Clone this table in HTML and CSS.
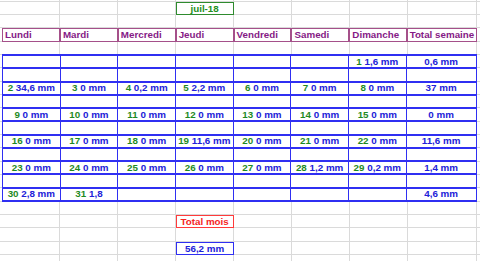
FILE: index.html
```html
<!DOCTYPE html>
<html lang="fr">
<head>
<meta charset="utf-8">
<title>Pluviométrie juil-18</title>
<link rel="stylesheet" href="styles.css">
</head>
<body>
<div class="sheet">
  <div class="month-box">juil-18</div>

  <div class="header-row">
    <div class="hcell">Lundi</div>
    <div class="hcell">Mardi</div>
    <div class="hcell">Mercredi</div>
    <div class="hcell">Jeudi</div>
    <div class="hcell">Vendredi</div>
    <div class="hcell">Samedi</div>
    <div class="hcell">Dimanche</div>
    <div class="hcell hcell-total">Total semaine</div>
  </div>

  <div class="weeks">
    <div class="c"></div><div class="c"></div><div class="c"></div><div class="c"></div><div class="c"></div><div class="c"></div>
    <div class="c"><span class="d">1</span> 1,6 mm</div><div class="c">0,6 mm</div>
    <div class="c"></div><div class="c"></div><div class="c"></div><div class="c"></div><div class="c"></div><div class="c"></div><div class="c"></div><div class="c"></div>

    <div class="c"><span class="d">2</span> 34,6 mm</div><div class="c"><span class="d">3</span> 0 mm</div><div class="c"><span class="d">4</span> 0,2 mm</div><div class="c"><span class="d">5</span> 2,2 mm</div><div class="c"><span class="d">6</span> 0 mm</div><div class="c"><span class="d">7</span> 0 mm</div><div class="c"><span class="d">8</span> 0 mm</div><div class="c">37 mm</div>
    <div class="c"></div><div class="c"></div><div class="c"></div><div class="c"></div><div class="c"></div><div class="c"></div><div class="c"></div><div class="c"></div>

    <div class="c"><span class="d">9</span> 0 mm</div><div class="c"><span class="d">10</span> 0 mm</div><div class="c"><span class="d">11</span> 0 mm</div><div class="c"><span class="d">12</span> 0 mm</div><div class="c"><span class="d">13</span> 0 mm</div><div class="c"><span class="d">14</span> 0 mm</div><div class="c"><span class="d">15</span> 0 mm</div><div class="c">0 mm</div>
    <div class="c"></div><div class="c"></div><div class="c"></div><div class="c"></div><div class="c"></div><div class="c"></div><div class="c"></div><div class="c"></div>

    <div class="c"><span class="d">16</span> 0 mm</div><div class="c"><span class="d">17</span> 0 mm</div><div class="c"><span class="d">18</span> 0 mm</div><div class="c"><span class="d">19</span> 11,6 mm</div><div class="c"><span class="d">20</span> 0 mm</div><div class="c"><span class="d">21</span> 0 mm</div><div class="c"><span class="d">22</span> 0 mm</div><div class="c">11,6 mm</div>
    <div class="c"></div><div class="c"></div><div class="c"></div><div class="c"></div><div class="c"></div><div class="c"></div><div class="c"></div><div class="c"></div>

    <div class="c"><span class="d">23</span> 0 mm</div><div class="c"><span class="d">24</span> 0 mm</div><div class="c"><span class="d">25</span> 0 mm</div><div class="c"><span class="d">26</span> 0 mm</div><div class="c"><span class="d">27</span> 0 mm</div><div class="c"><span class="d">28</span> 1,2 mm</div><div class="c"><span class="d">29</span> 0,2 mm</div><div class="c">1,4 mm</div>
    <div class="c"></div><div class="c"></div><div class="c"></div><div class="c"></div><div class="c"></div><div class="c"></div><div class="c"></div><div class="c"></div>

    <div class="c"><span class="d">30</span> 2,8 mm</div><div class="c"><span class="d">31</span> 1,8</div><div class="c"></div><div class="c"></div><div class="c"></div><div class="c"></div><div class="c"></div><div class="c">4,6 mm</div>
  </div>

  <div class="total-label">Total mois</div>
  <div class="total-value">56,2 mm</div>
</div>
</body>
</html>
```
FILE: styles.css
```css
html, body {
  margin: 0;
  padding: 0;
  background: #ffffff;
}

.sheet {
  width: 480px;
  height: 261px;
  overflow: hidden;
  display: grid;
  grid-template-columns: 2px repeat(7, 57.9px) 69.4px 1fr;
  grid-template-rows: 2px repeat(7, 13px 13px 14px);
  font-family: "Liberation Sans", Arial, sans-serif;
  font-weight: bold;
  font-size: 9.8px;
  line-height: 1;
  background-color: #ffffff;
  background-image:
    linear-gradient(#dadada, #dadada),
    linear-gradient(#dadada, #dadada),
    linear-gradient(#dadada, #dadada),
    linear-gradient(#dadada, #dadada),
    linear-gradient(#dadada, #dadada),
    linear-gradient(#dadada, #dadada),
    linear-gradient(#dadada, #dadada),
    linear-gradient(#dadada, #dadada),
    linear-gradient(to bottom,
      #dadada 0, #dadada 1px, transparent 1px, transparent 13px,
      #dadada 13px, #dadada 14px, transparent 14px, transparent 26px,
      #dadada 26px, #dadada 27px, transparent 27px, transparent 40px);
  background-repeat: no-repeat, no-repeat, no-repeat, no-repeat, no-repeat, no-repeat, no-repeat, no-repeat, repeat-y;
  background-size: 1px 100%, 1px 100%, 1px 100%, 1px 100%, 1px 100%, 1px 100%, 1px 100%, 1px 100%, 100% 40px;
  background-position: 59px 0, 117px 0, 175px 0, 233px 0, 291px 0, 349px 0, 407px 0, 476px 0, 0 1px;
}

.month-box {
  grid-column: 5;
  grid-row: 2;
  border: 1.5px solid #2e8b2e;
  color: #239023;
  background: #ffffff;
  display: flex;
  align-items: center;
  justify-content: center;
}

.header-row {
  grid-column: 2 / 10;
  grid-row: 4;
  display: grid;
  grid-template-columns: repeat(7, 57.9px) 69.4px;
}

.hcell {
  border: 1px solid #a5508a;
  color: #861a86;
  background: #ffffff;
  display: flex;
  align-items: center;
  padding-left: 2px;
  white-space: nowrap;
  overflow: hidden;
}

.hcell-total {
  justify-content: center;
  padding-left: 0;
}

.weeks {
  grid-column: 2 / 10;
  grid-row: 6 / 17;
  margin-top: -1px;
  display: grid;
  grid-template-columns: repeat(7, 1fr) 69px;
  grid-template-rows: repeat(11, 1fr);
  gap: 2px 1px;
  background: #2f2ff2;
  border: 2px solid #2f2ff2;
  border-left-width: 1.5px;
  border-right-width: 1.5px;
}

.c {
  background: #ffffff;
  color: #2121d8;
  display: flex;
  align-items: center;
  justify-content: center;
  white-space: pre;
}

.d {
  color: #1f8a1f;
}

.total-label {
  grid-column: 5;
  grid-row: 18;
  border: 1.5px solid #ff3b3b;
  color: #f52525;
  background: #ffffff;
  display: flex;
  align-items: center;
  justify-content: center;
}

.total-value {
  grid-column: 5;
  grid-row: 20;
  border: 1.5px solid #2f2ff2;
  color: #2121d8;
  background: #ffffff;
  display: flex;
  align-items: center;
  justify-content: center;
}
```
